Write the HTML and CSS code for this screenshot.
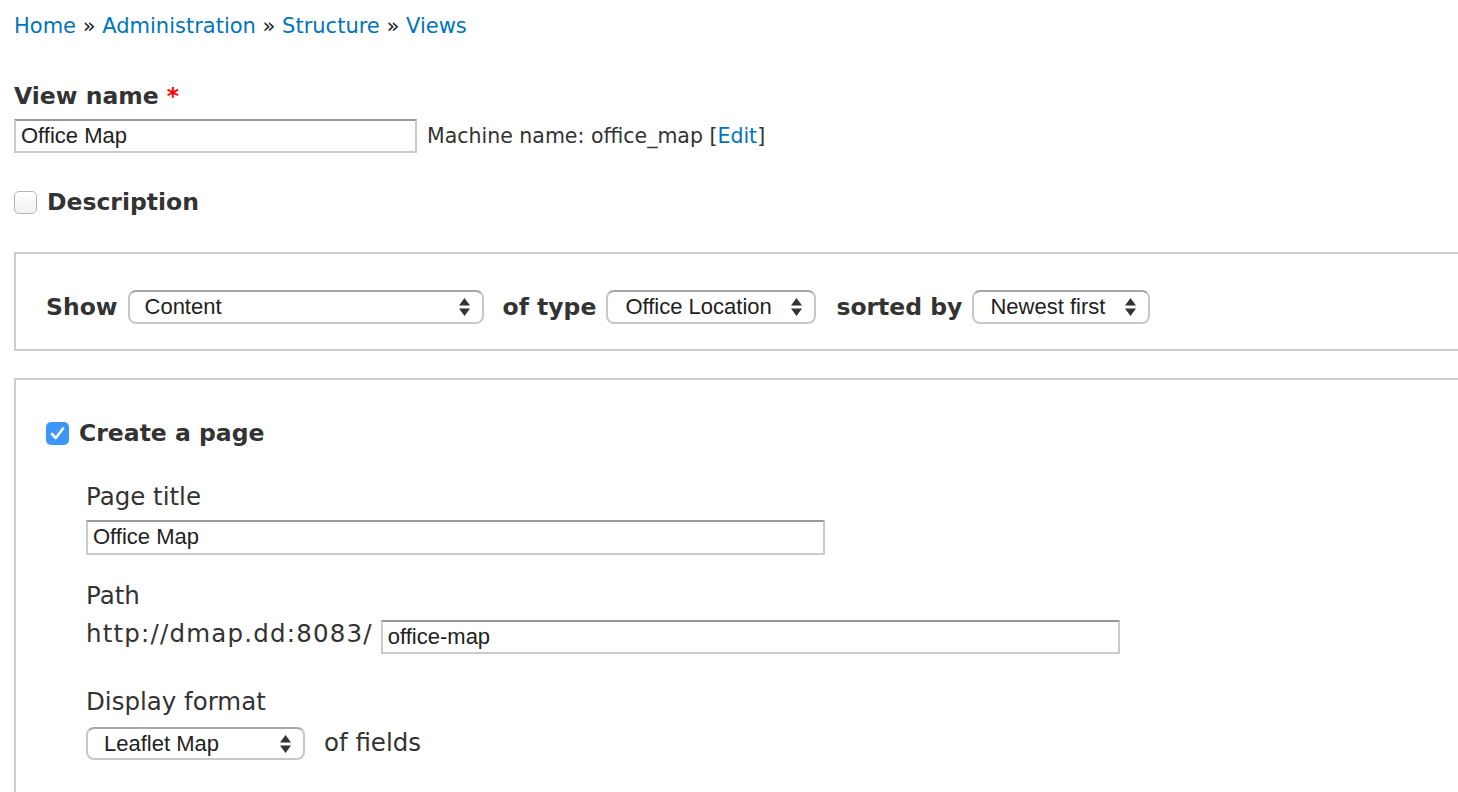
FILE: index.html
```html
<!DOCTYPE html>
<html lang="en">
<head>
<meta charset="utf-8">
<title>Add view</title>
<link rel="stylesheet" href="styles.css">
</head>
<body>
<div class="page">
  <nav class="breadcrumb"><a href="#">Home</a> » <a href="#">Administration</a> » <a href="#">Structure</a> » <a href="#">Views</a></nav>

  <div class="field-label bold">View name <span class="req">*</span></div>
  <div class="row">
    <div class="input w-name">Office Map</div>
    <span class="machine">Machine name: office_map [<a href="#">Edit</a>]</span>
  </div>

  <div class="row check-row desc-row">
    <span class="checkbox"></span>
    <span class="bold">Description</span>
  </div>

  <div class="box show-box">
    <span class="bold lbl">Show</span>
    <div class="select w-show"><span>Content</span><svg class="arrows" width="11" height="18" viewBox="0 0 11 18"><path d="M5.5 0 L11 7.5 H0 Z M0 10.5 H11 L5.5 18 Z" fill="#333"/></svg></div>
    <span class="bold lbl">of type</span>
    <div class="select w-type"><span>Office Location</span><svg class="arrows" width="11" height="18" viewBox="0 0 11 18"><path d="M5.5 0 L11 7.5 H0 Z M0 10.5 H11 L5.5 18 Z" fill="#333"/></svg></div>
    <span class="bold lbl">sorted by</span>
    <div class="select w-sort"><span>Newest first</span><svg class="arrows" width="11" height="18" viewBox="0 0 11 18"><path d="M5.5 0 L11 7.5 H0 Z M0 10.5 H11 L5.5 18 Z" fill="#333"/></svg></div>
  </div>

  <div class="box page-box">
    <div class="row check-row">
      <span class="checkbox checked"><svg width="23" height="23" viewBox="0 0 23 23"><path d="M6 12 L9.8 16 L17 6.5" fill="none" stroke="#fff" stroke-width="2.6" stroke-linecap="round" stroke-linejoin="round"/></svg></span>
      <span class="bold">Create a page</span>
    </div>
    <div class="page-fields">
      <div class="label reg l-title">Page title</div>
      <div class="input w-title">Office Map</div>

      <div class="label reg l-path">Path</div>
      <div class="row url-row">
        <span class="reg url">http://dmap.dd:8083/</span>
        <div class="input w-path">office-map</div>
      </div>

      <div class="label reg l-format">Display format</div>
      <div class="row fmt-row">
        <div class="select w-fmt"><span>Leaflet Map</span><svg class="arrows" width="11" height="18" viewBox="0 0 11 18"><path d="M5.5 0 L11 7.5 H0 Z M0 10.5 H11 L5.5 18 Z" fill="#333"/></svg></div>
        <span class="reg of-fields">of fields</span>
      </div>
    </div>
  </div>
</div>
</body>
</html>
```

FILE: styles.css
```css
html, body {
  margin: 0;
  padding: 0;
  overflow: hidden;
  background: #fff;
}
body {
  font-family: "DejaVu Sans", Verdana, sans-serif;
  color: #333;
}
a {
  color: #0074bd;
  text-decoration: none;
}
.page {
  padding-left: 14px;
}
.breadcrumb {
  padding-top: 11px;
  font-size: 21px;
  line-height: 30px;
  color: #222;
}
.bold {
  font-weight: bold;
  font-size: 23.5px;
  line-height: 30px;
  color: #333;
}
.reg {
  font-size: 24.5px;
  line-height: 30px;
  color: #333;
}
.field-label {
  margin-top: 40px;
}
.req {
  color: #f00;
}
.row {
  display: flex;
  align-items: center;
}
.input {
  box-sizing: border-box;
  height: 34px;
  border: 2px solid #cbcbcb;
  border-top-color: #999;
  font-family: "Liberation Sans", Arial, sans-serif;
  font-size: 22px;
  line-height: 30px;
  padding-left: 5px;
  color: #222;
  background: #fff;
}
.row > .input {
  margin-top: 8px;
}
.w-name {
  width: 403px;
}
.machine {
  margin-left: 10px;
  margin-top: 8px;
  font-size: 20.5px;
  line-height: 30px;
}
.desc-row {
  margin-top: 34px;
}
.checkbox {
  box-sizing: border-box;
  width: 23px;
  height: 23px;
  border: 1px solid #b5b5b5;
  border-radius: 5px;
  background: linear-gradient(#fff, #f1f1f1);
  margin-right: 10px;
  flex: none;
  display: flex;
}
.checkbox.checked {
  border: none;
  background: #3d97f8;
}
.box {
  border: 2px solid #ccc;
  margin-right: -30px;
}
.show-box {
  margin-top: 35px;
  display: flex;
  align-items: center;
  padding: 36px 0 25px 30px;
}
.lbl {
  margin-right: 10px;
}
.select {
  box-sizing: border-box;
  height: 34px;
  border: 2px solid #c8c8c8;
  border-top-color: #a8a8a8;
  border-radius: 8px;
  display: flex;
  align-items: center;
  justify-content: space-between;
  padding: 0 12px 0 15px;
  font-family: "Liberation Sans", Arial, sans-serif;
  font-size: 22px;
  color: #222;
  background: #fff;
  margin-right: 19px;
  flex: none;
}
.arrows {
  flex: none;
}
.w-show { width: 356px; }
.w-type { width: 210px; padding-left: 17px; margin-right: 20px; }
.w-sort { width: 178px; padding-left: 16px; }
.page-box {
  margin-top: 27px;
  padding: 38px 0 60px 30px;
}
.page-fields {
  padding-left: 40px;
}
.label {
  display: block;
}
.l-title {
  margin-top: 34px;
}
.input.w-title {
  width: 739px;
  height: 35px;
  margin-top: 8px;
}
.l-path {
  margin-top: 26px;
}
.url-row {
  margin-top: 8px;
}
.url {
  letter-spacing: 1.2px;
  margin-right: 8px;
  margin-bottom: 5px;
}
.url-row > .input.w-path {
  width: 739px;
  margin-top: 0;
}
.l-format {
  margin-top: 33px;
}
.fmt-row {
  margin-top: 10px;
}
.w-fmt {
  width: 219px;
  padding-left: 16px;
  height: 33px;
}
.of-fields {
  margin-bottom: 2px;
}
```
